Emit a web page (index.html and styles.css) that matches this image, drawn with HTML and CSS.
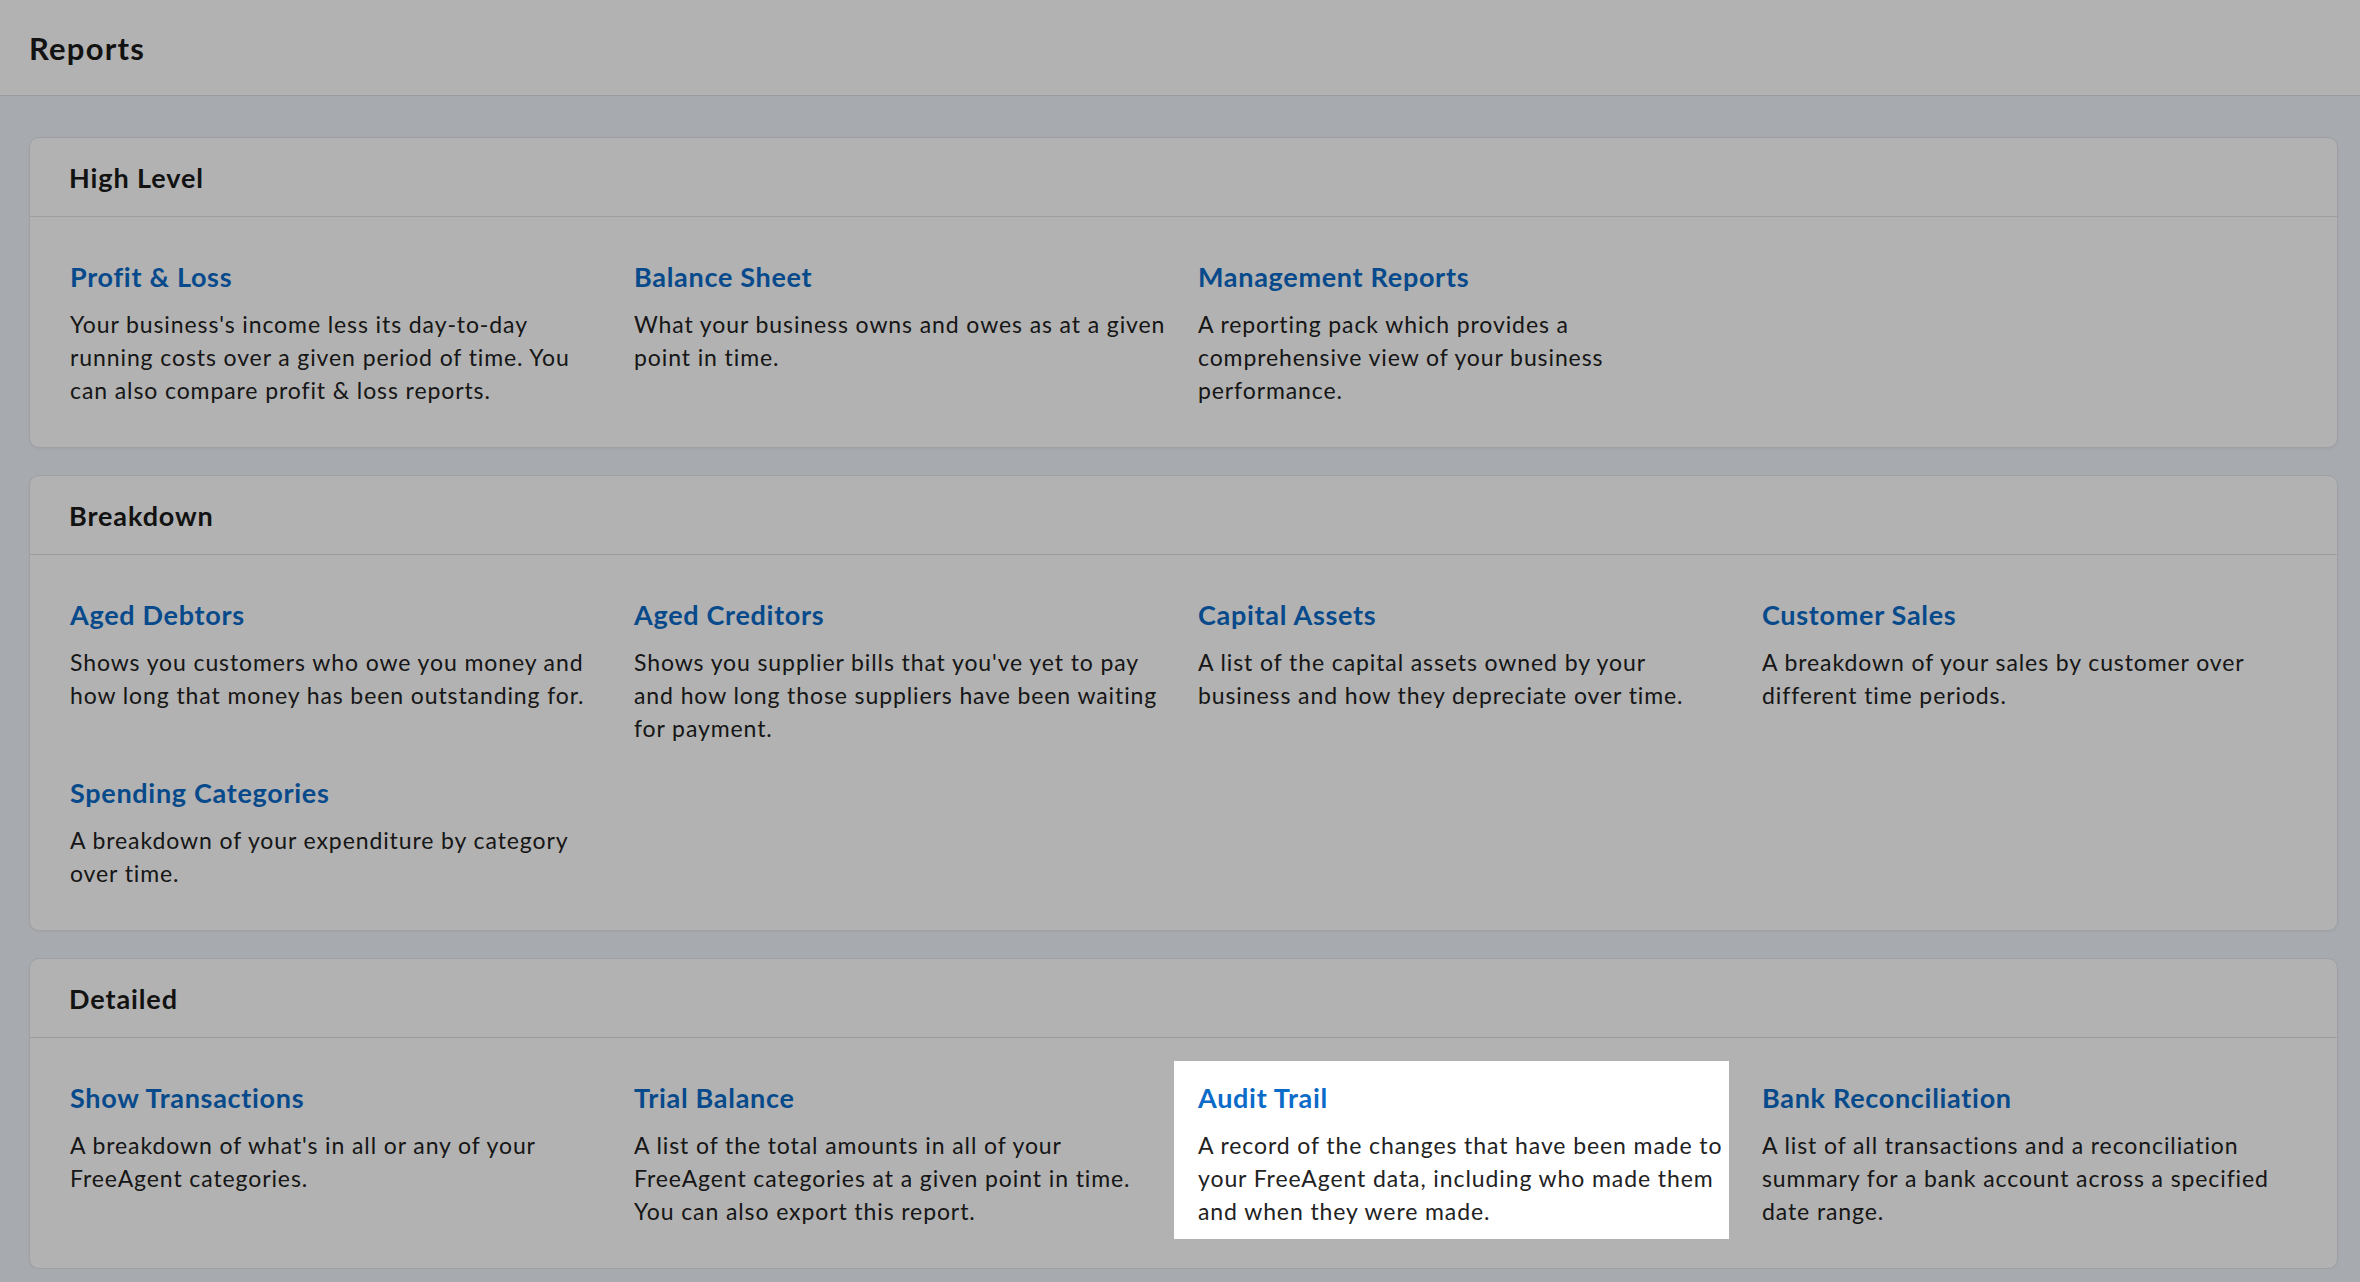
FILE: index.html
```html
<!DOCTYPE html>
<html lang="en">
<head>
    <meta charset="UTF-8">
    <title>Reports</title>
    <link rel="stylesheet" href="styles.css">
</head>
<body>
    <header class="topbar">
        <h1>Reports</h1>
    </header>

    <main class="page">
        <section class="card">
            <h2 class="card-head">High Level</h2>
            <div class="card-body">
                <div class="report">
                    <a href="#">Profit &amp; Loss</a>
                    <p>Your business's income less its day-to-day running costs over a given period of time. You can also compare profit &amp; loss reports.</p>
                </div>
                <div class="report">
                    <a href="#">Balance Sheet</a>
                    <p>What your business owns and owes as at a given point in time.</p>
                </div>
                <div class="report">
                    <a href="#">Management Reports</a>
                    <p>A reporting pack which provides a comprehensive view of your business performance.</p>
                </div>
            </div>
        </section>

        <section class="card">
            <h2 class="card-head">Breakdown</h2>
            <div class="card-body">
                <div class="report">
                    <a href="#">Aged Debtors</a>
                    <p>Shows you customers who owe you money and how long that money has been outstanding for.</p>
                </div>
                <div class="report">
                    <a href="#">Aged Creditors</a>
                    <p>Shows you supplier bills that you've yet to pay and how long those suppliers have been waiting for payment.</p>
                </div>
                <div class="report">
                    <a href="#">Capital Assets</a>
                    <p>A list of the capital assets owned by your business and how they depreciate over time.</p>
                </div>
                <div class="report">
                    <a href="#">Customer Sales</a>
                    <p>A breakdown of your sales by customer over different time periods.</p>
                </div>
                <div class="report">
                    <a href="#">Spending Categories</a>
                    <p>A breakdown of your expenditure by category over time.</p>
                </div>
            </div>
        </section>

        <section class="card">
            <h2 class="card-head">Detailed</h2>
            <div class="card-body">
                <div class="report">
                    <a href="#">Show Transactions</a>
                    <p>A breakdown of what's in all or any of your FreeAgent categories.</p>
                </div>
                <div class="report">
                    <a href="#">Trial Balance</a>
                    <p>A list of the total amounts in all of your FreeAgent categories at a given point in time. You can also export this report.</p>
                </div>
                <div class="report spotlight">
                    <a href="#">Audit Trail</a>
                    <p>A record of the changes that have been made to your FreeAgent data, including who made them and when they were made.</p>
                </div>
                <div class="report">
                    <a href="#">Bank Reconciliation</a>
                    <p>A list of all transactions and a reconciliation summary for a bank account across a specified date range.</p>
                </div>
            </div>
        </section>
    </main>

    <!-- dims everything except the highlighted report -->
    <div class="overlay"></div>
</body>
</html>
```

FILE: styles.css
```css
body {
    margin: 0;
    padding: 0;
    font-family: 'Lato', 'Liberation Sans', sans-serif;
    background-color: #f0f4fa;
    color: #222;
    overflow: hidden;
}

.topbar {
    height: 96px;
    box-sizing: border-box;
    display: flex;
    align-items: center;
    padding: 0 29px;
    background-color: #fff;
    border-bottom: 1px solid #dadee4;
}

.topbar h1 {
    margin: 0;
    font-size: 31px;
    font-weight: 700;
    letter-spacing: 1.2px;
    color: #1a1a1a;
}

.page {
    padding: 41px 22px 0 29px;
    display: flex;
    flex-direction: column;
    gap: 27px;
}

.card {
    background-color: #fff;
    border: 1px solid #e3e6ea;
    border-radius: 10px;
    box-shadow: 0 1px 3px rgba(0, 0, 0, 0.05);
}

.card-head {
    margin: 0;
    height: 78px;
    display: flex;
    align-items: center;
    padding: 0 39px;
    border-bottom: 1px solid #e1e2e5;
    font-size: 27px;
    font-weight: 700;
    letter-spacing: 0.9px;
    color: #1a1a1a;
}

.card-body {
    display: grid;
    grid-template-columns: repeat(4, 555px);
    column-gap: 9px;
    padding: 23px 16px 29px;
}

.report {
    padding: 20px 0 11px 24px;
}

.report a {
    display: block;
    font-size: 27px;
    line-height: 33px;
    font-weight: 700;
    letter-spacing: 0.7px;
    color: #0b6bc9;
    text-decoration: none;
}

/* text runs a little past the item box, as in the app */
.report p {
    margin: 15px -9px 0 0;
    font-size: 23px;
    line-height: 33px;
    letter-spacing: 0.9px;
    color: #222;
}

.overlay {
    position: fixed;
    top: 0;
    left: 0;
    width: 100%;
    height: 100%;
    background-color: rgba(0, 0, 0, 0.3);
    z-index: 10;
}

.spotlight {
    position: relative;
    z-index: 20;
    background-color: #fff;
}
```
